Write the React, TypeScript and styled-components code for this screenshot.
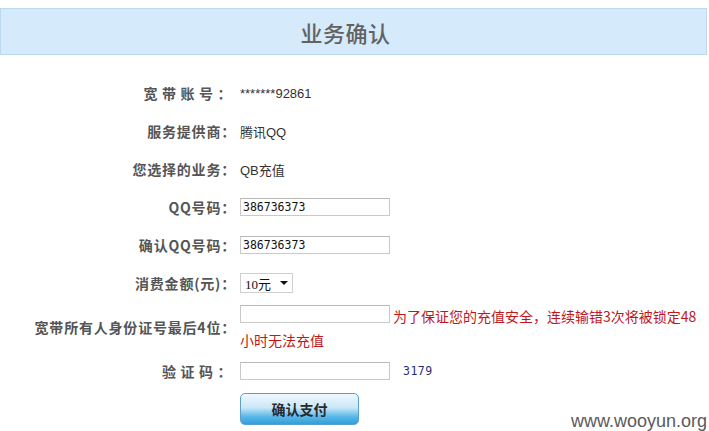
import React from 'react';
import styled, { createGlobalStyle } from 'styled-components';

const GlobalStyle = createGlobalStyle`
  html, body { margin: 0; padding: 0; background: #fff; }
  body {
    font-family: "Liberation Sans", Arial, "Noto Sans CJK SC", sans-serif;
    color: #333;
  }
`;

const Page = styled.div`
  position: relative;
  width: 709px;
  height: 431px;
  overflow: hidden;
  padding-top: 8px;
  box-sizing: border-box;
`;

const Header = styled.div`
  width: 707px;
  height: 47px;
  box-sizing: border-box;
  background: #d5eafa;
  border: 1px solid #bcd9ee;
  display: flex;
  align-items: center;
  justify-content: center;
  padding-right: 16px;
`;

const Title = styled.h1`
  margin: 0;
  font-family: "Noto Sans CJK SC", sans-serif;
  font-size: 22px;
  font-weight: 500;
  color: #626262;
  letter-spacing: 0.5px;
`;

const Form = styled.div`
  display: grid;
  grid-template-columns: 236px 469px;
  column-gap: 4px;
  margin-top: 19px;
`;

const Label: any = styled.div`
  height: ${(p: any) => p.h || 38}px;
  display: flex;
  align-items: center;
  justify-content: flex-end;
  font-family: "Noto Sans CJK SC", sans-serif;
  font-size: 14px;
  font-weight: 700;
  color: #555;
  letter-spacing: ${(p: any) => (p.spaced ? '4.5px' : '0.8px')};
  white-space: nowrap;
`;

const Value: any = styled.div`
  height: ${(p: any) => p.h || 38}px;
  display: flex;
  align-items: center;
  font-family: "Liberation Sans", Arial, "Noto Sans CJK SC", sans-serif;
  font-size: 13px;
  color: #333;
`;

const WrapValue = styled.div`
  height: 50px;
  box-sizing: border-box;
  padding-top: 3px;
  padding-right: 6px;
  line-height: 23px;
  font-size: 14px;
`;

const TextInput = styled.div`
  display: inline-block;
  vertical-align: top;
  width: 150px;
  height: 18px;
  box-sizing: border-box;
  border: 1px solid #c9c9c9;
  border-top-color: #b9b9b9;
  background: #fff;
  font-family: "DejaVu Sans Mono", "Liberation Mono", monospace;
  font-size: 11.5px;
  line-height: 16px;
  padding-left: 2px;
  color: #111;
`;

const Warn = styled.span`
  font-family: "Noto Sans CJK SC", sans-serif;
  color: #c0171c;
  font-size: 14px;
  margin-left: 3px;
`;

const Select = styled.div`
  width: 53px;
  height: 20px;
  box-sizing: border-box;
  border: 1px solid #cfcfcf;
  display: flex;
  align-items: center;
  padding-left: 4px;
  gap: 9px;
  font-family: "Liberation Serif", "Noto Sans CJK SC", serif;
  font-size: 13px;
  color: #111;
`;

const Arrow = styled.span`
  width: 0;
  height: 0;
  border-left: 4px solid transparent;
  border-right: 4px solid transparent;
  border-top: 4px solid #111;
`;

const Captcha = styled.span`
  margin-left: 13px;
  font-family: "DejaVu Sans Mono", "Liberation Mono", monospace;
  font-size: 11.5px;
  color: #1e2d7a;
  letter-spacing: 0.5px;
`;

const PayButton = styled.button`
  width: 119px;
  height: 32px;
  border: 1px solid #5d9fc9;
  border-radius: 5px;
  background: linear-gradient(#eef8fe 0%, #cbe8f8 45%, #5ab8ea 75%, #2f9fdc 100%);
  font-family: "Noto Sans CJK SC", sans-serif;
  font-size: 14px;
  font-weight: 700;
  color: #2a2a2a;
  padding: 0;
  cursor: pointer;
`;

const Watermark = styled.div`
  position: absolute;
  right: 2px;
  bottom: -1px;
  font-family: "Liberation Sans", Arial, sans-serif;
  font-size: 18px;
  color: #5a5a5a;
`;

export default function App() {
  return (
    <Page>
      <GlobalStyle />
      <Header>
        <Title>业务确认</Title>
      </Header>
      <Form>
        <Label spaced>宽带账号：</Label>
        <Value>*******92861</Value>

        <Label>服务提供商：</Label>
        <Value>腾讯QQ</Value>

        <Label>您选择的业务：</Label>
        <Value>QB充值</Value>

        <Label>QQ号码：</Label>
        <Value><TextInput>386736373</TextInput></Value>

        <Label>确认QQ号码：</Label>
        <Value><TextInput>386736373</TextInput></Value>

        <Label>消费金额(元)：</Label>
        <Value>
          <Select>10元<Arrow /></Select>
        </Value>

        <Label h={50}>宽带所有人身份证号最后4位：</Label>
        <WrapValue>
          <TextInput />
          <Warn>为了保证您的充值安全，连续输错3次将被锁定48小时无法充值</Warn>
        </WrapValue>

        <Label spaced>验证码：</Label>
        <Value>
          <TextInput />
          <Captcha>3179</Captcha>
        </Value>

        <Label />
        <Value>
          <PayButton>确认支付</PayButton>
        </Value>
      </Form>
      <Watermark>www.wooyun.org</Watermark>
    </Page>
  );
}
